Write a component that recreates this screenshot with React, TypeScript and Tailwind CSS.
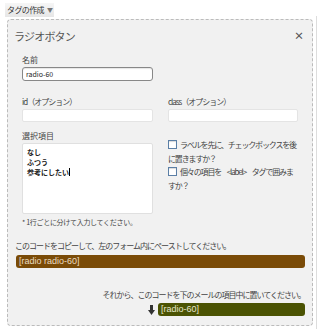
import React from "react";

const jp = "font-['Noto_Sans_CJK_JP','Noto_Sans',sans-serif]";

const Checkbox = ({ text }: { text: string }) => (
  <div className="text-[8px] leading-[13.5px] tracking-[-1.15px] [word-spacing:5px] text-[#444]">
    <span className="inline-block w-[9px] h-[9px] align-[-1px] mr-[3px] border border-[#5b7fa6] bg-white shadow-[inset_0_1px_1px_rgba(0,0,0,0.15)]" />
    {text}
  </div>
);

const App = () => {
  return (
    <div className={`w-[320px] h-[329px] bg-white overflow-hidden relative ${jp}`}>
      {/* top tag button */}
      <div className="flex pl-[5px] pt-[3px] leading-none">
        <div className="flex items-center h-[14px] px-[2px] gap-[3px] bg-gradient-to-b from-[#f6f6f6] to-[#e6e6e6] text-[8px] tracking-[-0.6px] text-[#333]">
          タグの作成
          <span className="text-[6px] text-[#777]">▼</span>
        </div>
      </div>

      <div className="absolute right-[3px] top-[16px] bottom-0 w-px bg-[#ddd]" />

      <div className="ml-[7px] mt-[2px] w-[306px] h-[307px] border border-dashed border-[#bbb] rounded-[4px] bg-[#f1f1f1] text-[#444]">
        <div className="flex items-center justify-between pl-[6px] pr-[8px] h-[32px]">
          <div className="text-[11px] tracking-[-0.8px] text-[#555]">ラジオボタン</div>
          <div className="text-[10px] font-bold text-[#555] leading-none">×</div>
        </div>

        <div className="grid grid-cols-[131px_130px] gap-x-[15px] pl-[14px]">
          <div>
            <div className="text-[8px] leading-[14px] mt-[1px]">名前</div>
            <div className="h-[14px] border border-[#888] rounded-[3px] bg-white shadow-[inset_0_1px_1px_rgba(0,0,0,0.1)] flex items-center pl-[3px] text-[7px] text-[#222]">
              radio-60
            </div>
          </div>
          <div />

          <div className="mt-[14px]">
            <div className="text-[8px] leading-[14px] tracking-[-1px]">id（オプション）</div>
            <div className="h-[13px] border border-[#e4e4e4] rounded-[2px] bg-white" />
          </div>
          <div className="mt-[14px]">
            <div className="text-[8px] leading-[14px] tracking-[-1px]">class（オプション）</div>
            <div className="h-[13px] border border-[#e4e4e4] rounded-[2px] bg-white" />
          </div>

          <div className="mt-[7px]">
            <div className="text-[8px] leading-[14px]">選択項目</div>
            <div className="h-[71px] border border-[#e0e0e0] rounded-[2px] bg-white pl-[4px] pt-[3px] text-[7px] leading-[10px] text-[#222] font-bold">
              <div>なし</div>
              <div>ふつう</div>
              <div>
                参考にしたい<span className="inline-block w-px h-[8px] bg-black align-[-1px]" />
              </div>
            </div>
            <div className="text-[7px] leading-[14px] mt-[1px] tracking-[-0.3px]">* 1行ごとに分けて入力してください。</div>
          </div>
          <div className="mt-[16px]">
            <Checkbox text="ラベルを先に、チェックボックスを後に置きますか？" />
            <Checkbox text="個々の項目を <label> タグで囲みますか？" />
          </div>
        </div>

        <div className="px-[7px] mt-[10px]">
          <div className="text-[8px] leading-[14px] tracking-[-1px]">このコードをコピーして、左のフォーム内にペーストしてください。</div>
          <div className="h-[13px] ml-[1px] mt-[2px] rounded-[3px] bg-[#7a4b07] text-[#eadbc0] text-[9px] leading-[13px] pl-[3px] font-['Liberation_Sans',sans-serif]">
            [radio radio-60]
          </div>
          <div className="text-[8px] leading-[14px] tracking-[-1px] text-right mt-[20px]">それから、このコードを下のメールの項目中に置いてください。</div>
          <div className="flex items-center justify-end gap-[3px] mt-[1px]">
            <svg width="7" height="10" viewBox="0 0 7 10">
              <rect x="2" y="0" width="3" height="6" fill="#333" />
              <polygon points="0,5 7,5 3.5,10" fill="#333" />
            </svg>
            <div className="w-[147px] h-[13px] rounded-[3px] bg-[#4b5303] text-[#e6e8cc] text-[9px] leading-[13px] pl-[3px] font-['Liberation_Sans',sans-serif]">
              [radio-60]
            </div>
          </div>
        </div>
      </div>
    </div>
  );
};

export default App;
